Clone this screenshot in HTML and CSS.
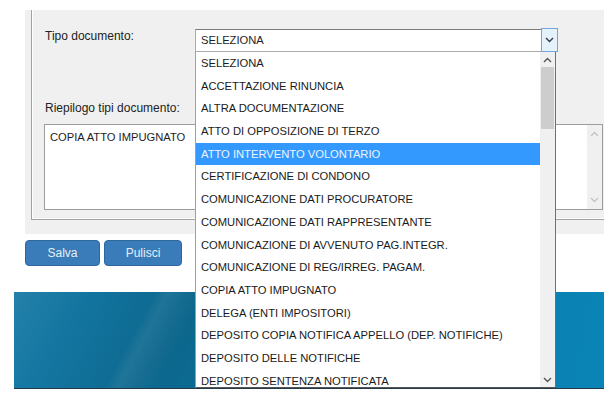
FILE: index.html
```html
<!DOCTYPE html>
<html lang="it">
<head>
  <meta charset="UTF-8" />
  <meta name="viewport" content="width=device-width, initial-scale=1" />
  <title>Tipo documento</title>
  <link rel="stylesheet" href="styles.css">
</head>
<body>
  <div class="screen">
    <div class="panel">
      <div class="group">
        <div class="row">
          <label class="lbl lbl-tipo" for="tipo">Tipo documento:</label>
          <div class="combo" id="tipo">
            <div class="combo-box">
              <span class="combo-text">SELEZIONA</span>
              <span class="combo-btn">
                <svg width="9" height="6" viewBox="0 0 9 6"><path d="M1 1 L4.5 4.5 L8 1" fill="none" stroke="#3a3a3a" stroke-width="1.4"/></svg>
              </span>
            </div>
            <div class="dropdown">
              <ul class="options">
                <li>SELEZIONA</li>
                <li>ACCETTAZIONE RINUNCIA</li>
                <li>ALTRA DOCUMENTAZIONE</li>
                <li>ATTO DI OPPOSIZIONE DI TERZO</li>
                <li class="active">ATTO INTERVENTO VOLONTARIO</li>
                <li>CERTIFICAZIONE DI CONDONO</li>
                <li>COMUNICAZIONE DATI PROCURATORE</li>
                <li>COMUNICAZIONE DATI RAPPRESENTANTE</li>
                <li>COMUNICAZIONE DI AVVENUTO PAG.INTEGR.</li>
                <li>COMUNICAZIONE DI REG/IRREG. PAGAM.</li>
                <li>COPIA ATTO IMPUGNATO</li>
                <li>DELEGA (ENTI IMPOSITORI)</li>
                <li>DEPOSITO COPIA NOTIFICA APPELLO (DEP. NOTIFICHE)</li>
                <li>DEPOSITO DELLE NOTIFICHE</li>
                <li>DEPOSITO SENTENZA NOTIFICATA</li>
              </ul>
              <div class="scrollbar">
                <span class="arrow">
                  <svg width="9" height="6" viewBox="0 0 9 6"><path d="M1 5 L4.5 1.5 L8 5" fill="none" stroke="#555" stroke-width="1.4"/></svg>
                </span>
                <span class="thumb"></span>
                <span class="track"></span>
                <span class="arrow">
                  <svg width="9" height="6" viewBox="0 0 9 6"><path d="M1 1 L4.5 4.5 L8 1" fill="none" stroke="#555" stroke-width="1.4"/></svg>
                </span>
              </div>
            </div>
          </div>
        </div>

        <div class="lbl lbl-riep">Riepilogo tipi documento:</div>
        <div class="summary">
          <div class="summary-text">COPIA ATTO IMPUGNATO</div>
          <div class="summary-scroll">
            <svg width="9" height="6" viewBox="0 0 9 6"><path d="M1 5 L4.5 1.5 L8 5" fill="none" stroke="#c4c4c4" stroke-width="1.3"/></svg>
            <svg width="9" height="6" viewBox="0 0 9 6"><path d="M1 1 L4.5 4.5 L8 1" fill="none" stroke="#c4c4c4" stroke-width="1.3"/></svg>
          </div>
        </div>
      </div>
    </div>

    <div class="actions">
      <button class="btn btn-salva" type="button">Salva</button>
      <button class="btn btn-pulisci" type="button">Pulisci</button>
    </div>

    <div class="banner"></div>
  </div>
</body>
</html>
```

FILE: styles.css
```css
body { margin: 0; background: #fff; font-family: "Liberation Sans", Arial, sans-serif; color: #1e1e1e; }
.screen { padding-top: 10px; width: 612px; height: 387px; overflow: hidden; }

.panel { margin-left: 25px; width: 579px; height: 224px; background: #f0f0f0; padding-left: 6px; box-sizing: border-box; }
.group { padding: 19px 0 9px 12px; border-left: 1px solid #a3a3a3; border-bottom: 1px solid #a3a3a3; box-shadow: inset 1px -1px 0 #fff; }

.row { display: flex; align-items: flex-start; }
.lbl { font-size: 12px; line-height: 14px; color: #222; }
.lbl-tipo { width: 150px; padding-left: 1px; }
.lbl-riep { margin: 49px 0 9px 1px; }

.combo { position: relative; width: 363px; }
.combo-box { display: flex; height: 23px; box-sizing: border-box; background: #fff; border: 1px solid #acacac; border-top-color: #7a7a7a; }
.combo-text { flex: 1; padding-left: 5px; font-size: 11.2px; line-height: 21px; }
.combo-btn { width: 15px; margin: -2px -1px -1px 0; display: flex; align-items: center; justify-content: center; background: #e5f1fb; border: 1px solid #6fa8dc; }

.dropdown { position: absolute; top: 23px; left: 0; width: 361px; height: 336px; box-sizing: border-box; display: flex; background: #fff; border-left: 1px solid #a0a0a0; border-bottom: 1px solid #555; z-index: 5; }
.options { list-style: none; margin: 0; padding: 0; flex: 1; overflow: hidden; }
.options li { height: 22.7px; line-height: 22.7px; padding-left: 5px; font-size: 11.2px; white-space: nowrap; color: #1a1a1a; }
.options li.active { background: #3399ff; color: #eef5ff; }
.scrollbar { width: 15px; display: flex; flex-direction: column; background: #f0f0f0; border-right: 1px solid #707070; }
.scrollbar .arrow { height: 15px; display: flex; align-items: center; justify-content: center; }
.scrollbar .thumb { height: 62px; margin: 0 1px; background: #cdcdcd; }
.scrollbar .track { flex: 1; }

.summary { display: flex; width: 559px; height: 86px; box-sizing: border-box; background: #fff; border: 1px solid #9d9d9d; }
.summary-text { flex: 1; padding: 5px 5px; font-size: 11.2px; line-height: 14px; }
.summary-scroll { width: 15px; display: flex; flex-direction: column; justify-content: space-between; align-items: center; padding: 6px 0; background: #f0f0f0; }

.actions { display: flex; gap: 4px; margin: 6px 0 0 25px; }
.btn { height: 26px; padding: 0; font-family: "Liberation Sans", Arial, sans-serif; font-size: 12px; color: #e6eef7; background: #3a7cb9; border: 1px solid #2c679e; border-radius: 4px; }
.btn-salva { width: 75px; }
.btn-pulisci { width: 78px; }

.banner {
  margin: 26px 0 0 14px; width: 590px; height: 96px; border-bottom: 1px solid #24394a;
  background:
    linear-gradient(118deg, rgba(255,255,255,0) 0%, rgba(255,255,255,0) 22%, rgba(255,255,255,0.07) 24%, rgba(255,255,255,0) 30%, rgba(0,0,0,0) 100%),
    linear-gradient(122deg, rgba(255,255,255,0.06) 0%, rgba(255,255,255,0) 12%, rgba(0,0,0,0.08) 28%, rgba(0,0,0,0) 45%),
    linear-gradient(100deg, #1679a4 0%, #0d6e97 30%, #0b76a3 60%, #0a85b7 100%);
}
```
